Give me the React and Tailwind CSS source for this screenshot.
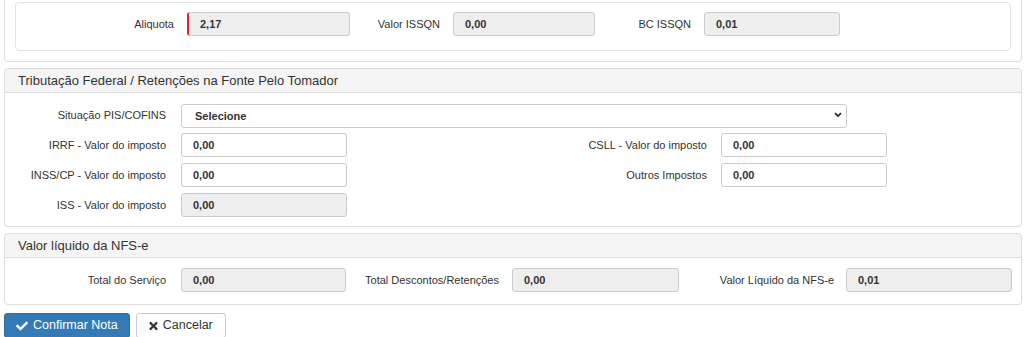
import { useState } from "react";

// Resumo de impostos da NFS-e
const inputBase =
  "h-[24px] border border-[#ccc] rounded-[3px] px-[11px] text-[11px] font-bold text-[#333] flex items-center";

function Field({ value, readOnly, className = "" }) {
  return (
    <div className={`${inputBase} ${readOnly ? "bg-[#eee]" : "bg-white"} ${className}`}>
      {value}
    </div>
  );
}

function Label({ children, className = "" }) {
  return <div className={`text-[11px] text-[#333] text-right shrink-0 ${className}`}>{children}</div>;
}

function Panel({ title, children, bodyClass = "" }) {
  return (
    <div className="border border-[#ddd] rounded-[4px] bg-white">
      {title && (
        <div className="h-[24px] bg-[#f5f5f5] border-b border-[#ddd] rounded-t-[4px] px-[13px] flex items-center text-[13px] text-[#333]">
          {title}
        </div>
      )}
      <div className={bodyClass}>{children}</div>
    </div>
  );
}

function CheckIcon() {
  return (
    <svg viewBox="0 0 512 512" className="w-[12px] h-[12px] fill-white">
      <path d="M173.9 439.4l-166.4-166.4c-10-10-10-26.2 0-36.2l36.2-36.2c10-10 26.2-10 36.2 0L192 312.7 432.1 72.6c10-10 26.2-10 36.2 0l36.2 36.2c10 10 10 26.2 0 36.2L210.1 439.4c-10 10-26.2 10-36.2 0z" />
    </svg>
  );
}

function TimesIcon() {
  return (
    <svg viewBox="0 0 352 512" className="w-[9px] h-[12px] fill-[#333]">
      <path d="M242.7 256l100.1-100.1c12.3-12.3 12.3-32.2 0-44.5l-22.2-22.2c-12.3-12.3-32.2-12.3-44.5 0L176 189.3 75.9 89.2c-12.3-12.3-32.2-12.3-44.5 0L9.2 111.5c-12.3 12.3-12.3 32.2 0 44.5L109.3 256 9.2 356.1c-12.3 12.3-12.3 32.2 0 44.5l22.2 22.2c12.3 12.3 32.2 12.3 44.5 0L176 322.7l100.1 100.1c12.3 12.3 32.2 12.3 44.5 0l22.2-22.2c12.3-12.3 12.3-32.2 0-44.5L242.7 256z" />
    </svg>
  );
}

export default function App() {
  const [situacao, setSituacao] = useState("");

  return (
    <div className="font-['Liberation_Sans',Arial,sans-serif] text-[#333] pl-[4px] pr-[2px] -mt-[9px] bg-white h-[346px] overflow-hidden">
      {/* ISSQN */}
      <Panel bodyClass="p-[10px]">
        <div className="border border-[#e3e3e3] rounded-[4px] bg-white pt-[9px] pb-[14px] flex items-center">
          <Label className="w-[158px] mr-[13px]">Aliquota</Label>
          <Field value="2,17" readOnly className="w-[163px] border-l-2 border-l-[#e8202a]" />
          <Label className="w-[90px] mr-[13px]">Valor ISSQN</Label>
          <Field value="0,00" readOnly className="w-[142px]" />
          <Label className="w-[96px] mr-[13px]">BC ISSQN</Label>
          <Field value="0,01" readOnly className="w-[136px]" />
        </div>
      </Panel>

      <div className="h-[6px]" />

      <Panel title="Tributação Federal / Retenções na Fonte Pelo Tomador" bodyClass="pt-[10px] pb-[9px] flex flex-col gap-[6px]">
        <div className="flex items-center">
          <Label className="w-[161px] mr-[15px]">Situação PIS/COFINS</Label>
          <div className="relative w-[666px] h-[24px]">
            <select
              value={situacao}
              onChange={(e) => setSituacao(e.target.value)}
              className="appearance-none w-full h-full border border-[#ccc] rounded-[3px] bg-white pl-[13px] text-[11px] font-bold text-[#333] outline-none"
            >
              <option value="">Selecione</option>
            </select>
            <svg viewBox="0 0 10 8" className="absolute right-[5px] top-[9px] w-[8px] h-[6px] pointer-events-none">
              <path d="M1 1.5 L5 5.5 L9 1.5" fill="none" stroke="#222" strokeWidth="2.2" />
            </svg>
          </div>
        </div>
        <div className="flex items-center">
          <Label className="w-[161px] mr-[15px]">IRRF - Valor do imposto</Label>
          <Field value="0,00" className="w-[166px]" />
          <Label className="w-[360px] mr-[14px]">CSLL - Valor do imposto</Label>
          <Field value="0,00" className="w-[166px]" />
        </div>
        <div className="flex items-center">
          <Label className="w-[161px] mr-[15px]">INSS/CP - Valor do imposto</Label>
          <Field value="0,00" className="w-[166px]" />
          <Label className="w-[360px] mr-[14px]">Outros Impostos</Label>
          <Field value="0,00" className="w-[166px]" />
        </div>
        <div className="flex items-center">
          <Label className="w-[161px] mr-[15px]">ISS - Valor do imposto</Label>
          <Field value="0,00" readOnly className="w-[166px]" />
        </div>
      </Panel>

      <div className="h-[6px]" />

      <Panel title="Valor líquido da NFS-e" bodyClass="pt-[10px] pb-[12px] flex items-center">
        <Label className="w-[161px] mr-[15px]">Total do Serviço</Label>
        <Field value="0,00" readOnly className="w-[165px]" />
        <Label className="w-[153px] mr-[13px]">Total Descontos/Retenções</Label>
        <Field value="0,00" readOnly className="w-[167px]" />
        <Label className="w-[155px] mr-[12px]">Valor Líquido da NFS-e</Label>
        <Field value="0,01" readOnly className="w-[166px]" />
      </Panel>

      <div className="mt-[8px] flex gap-[6px]">
        <button className="h-[25px] px-[11px] rounded-[3px] bg-[#337ab7] border border-[#2e6da4] text-white text-[12.5px] flex items-center gap-[5px]">
          <CheckIcon />
          Confirmar Nota
        </button>
        <button className="h-[25px] px-[12px] rounded-[3px] bg-white border border-[#ccc] text-[#333] text-[12.5px] flex items-center gap-[5px]">
          <TimesIcon />
          Cancelar
        </button>
      </div>
    </div>
  );
}
